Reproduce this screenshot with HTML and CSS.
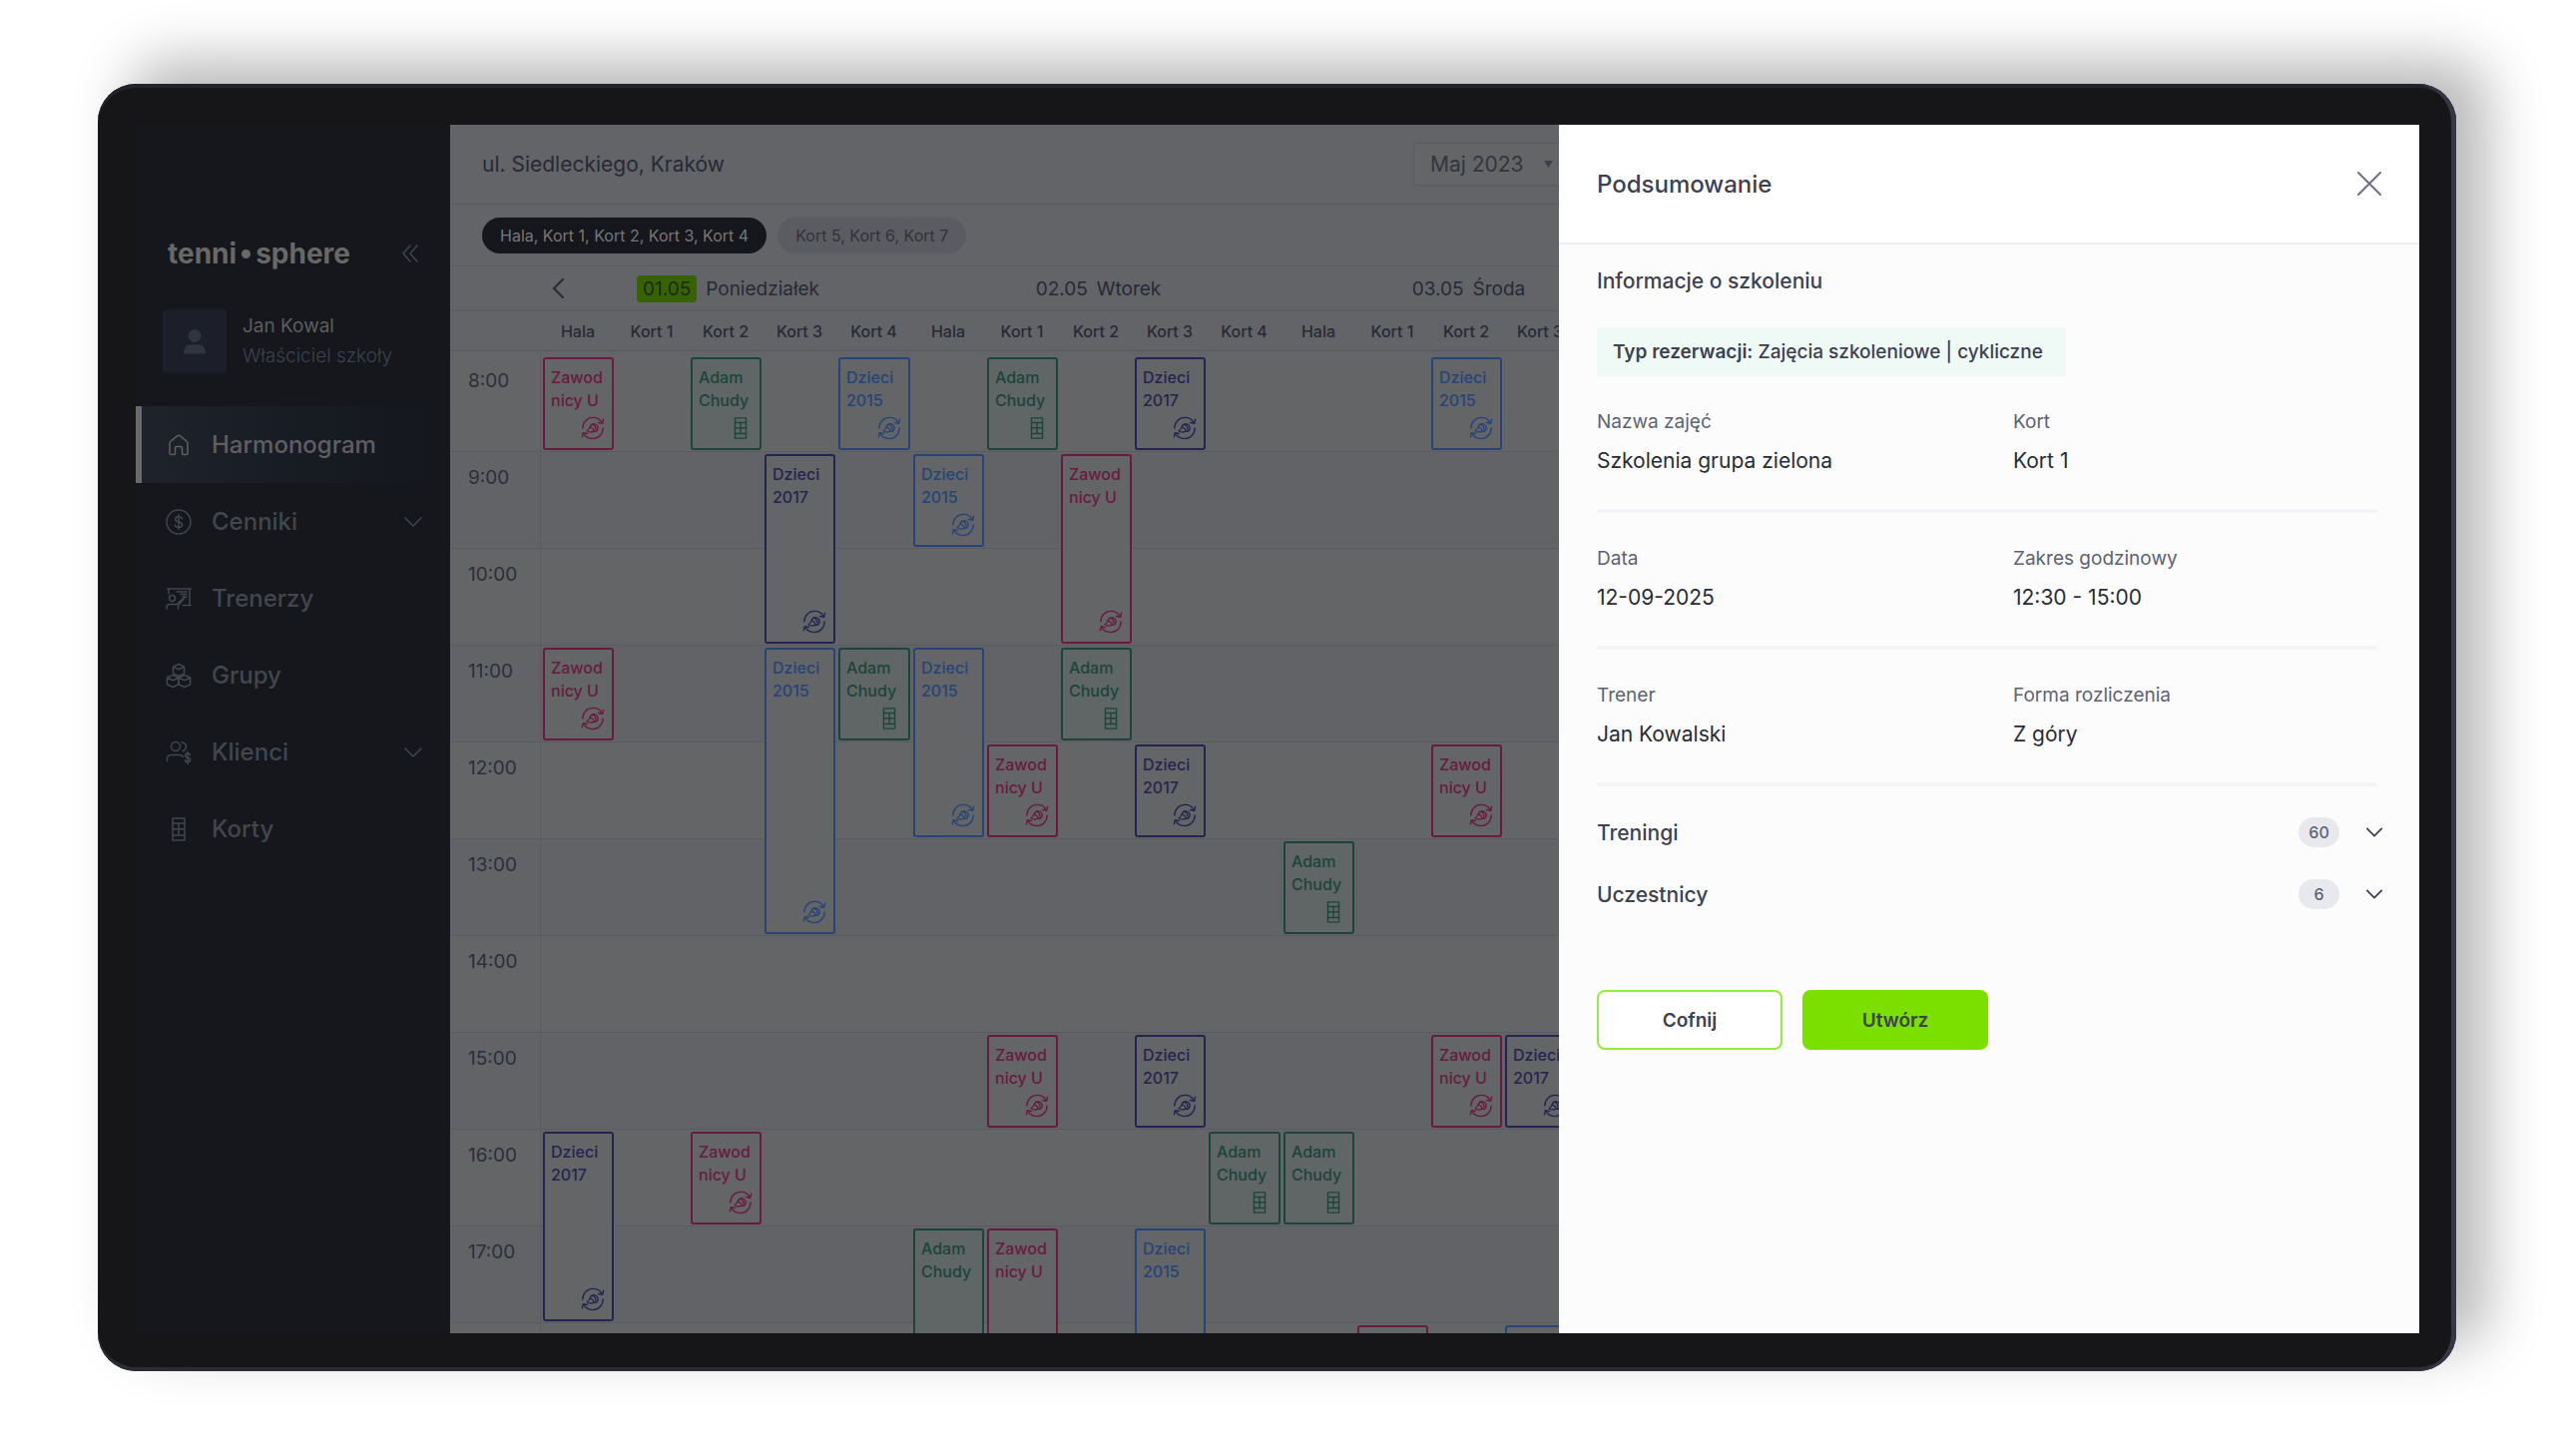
FILE: index.html
```html
<!DOCTYPE html>
<html lang="pl">

<head>
    <meta charset="UTF-8">
    <meta name="viewport" content="width=device-width, initial-scale=1.0">
    <title>tennisphere - Harmonogram</title>
    <link rel="stylesheet" href="styles.css">
</head>

<body>
    <!-- icons -->
    <svg class="sprite" xmlns="http://www.w3.org/2000/svg">
        <symbol id="i-home" viewBox="0 0 26 26">
            <path d="M4 11.5 Q4 10 5.2 9 L11.6 3.8 Q13 2.8 14.4 3.8 L20.8 9 Q22 10 22 11.5 V21 Q22 22.5 20.5 22.5 H17.5 Q16.5 22.5 16.5 21.5 V16 Q16.5 14.5 15 14.5 H11 Q9.5 14.5 9.5 16 V21.5 Q9.5 22.5 8.5 22.5 H5.5 Q4 22.5 4 21 Z" />
        </symbol>
        <symbol id="i-price" viewBox="0 0 26 26">
            <circle cx="13" cy="13" r="12" />
            <path d="M16.4 9.8 Q16 7.8 13 7.8 Q9.700 7.8 9.7 10.3 Q9.7 12.5 13 13 Q16.5 13.5 16.5 15.9 Q16.5 18.3 13 18.3 Q9.8 18.3 9.4 16.1 M13 5.8 V20.2" />
        </symbol>
        <symbol id="i-coach" viewBox="0 0 26 26">
            <path d="M1.5 3 H25 M3 3 V8 M24 3 V19.5 M17.5 19.5 H25 M11 6 H21 M15 8.5 H21 M17 11 H21" />
            <circle cx="6.5" cy="12.5" r="3" />
            <path d="M1 23 V21.5 Q1 18.5 4 18.5 H11 L19.5 11 L12.5 20 V23" />
        </symbol>
        <symbol id="i-group" viewBox="0 0 26 26">
            <path d="M13 1.5 L18.5 4.2 V10.8 L13 13.5 L7.5 10.8 V4.2 Z M7.5 4.2 L13 6.8 L18.5 4.2" />
            <path d="M7.2 12.5 L13 15 V21.8 L7.2 24.5 L1.4 21.8 V15 Z M1.4 15 L7.2 17.7 L13 15" />
            <path d="M18.8 12.5 L24.6 15 V21.8 L18.8 24.5 L13 21.8 V15 Z M13 15 L18.8 17.7 L24.6 15" />
        </symbol>
        <symbol id="i-client" viewBox="0 0 26 26">
            <circle cx="10" cy="7" r="4.5" />
            <path d="M1.5 21.5 V19.5 Q1.5 15.5 5.5 15.5 H13.5 Q16.5 15.5 17.5 17.5 M16 2.8 Q20.5 4 20.5 7 Q20.5 10.5 17 11.5" />
            <path d="M24.5 15.5 Q24 14 22 14 Q19.5 14 19.5 16 Q19.5 17.8 22 18.2 Q24.7 18.6 24.7 20.5 Q24.7 22.5 22 22.5 Q19.8 22.5 19.3 20.8 M22 12.5 V24.5" />
        </symbol>
        <symbol id="i-court" viewBox="0 0 26 26">
            <path d="M7 2 H19 V24 H7 Z M7 7 H19 M7 12.8 H19 M7 19 H19 M13 7 V19" />
        </symbol>
        <symbol id="i-cycle" viewBox="0 0 26 26">
            <path d="M2 13 C2 6.5 7 1.500 13 1.5 C17.5 1.5 21.5 4 23 7.5 M24.5 3.5 L23.5 8 L19 7" />
            <path d="M24 13 C24 19.5 19 24.5 13 24.5 C8.5 24.500 4.5 22 3 18.5 M1.5 22.5 L2.5 18 L7 19" />
            <path d="M6.500 16 Q9 14.500 10 11.500 Q11.500 8 15 8.500 Q19 9.500 18.500 13.500 Q17.500 17 14 16.500 Q10.500 18.500 6.500 16 Z M10 12 Q14 13 14 16.500 M13 9 Q16.500 10.500 16 14" />
        </symbol>
        <symbol id="i-down" viewBox="0 0 20 20">
            <path d="M2 6 L10 14 L18 6" />
        </symbol>
    </svg>

    <div class="device">
        <div class="screen">
            <aside class="sidebar">
                <div class="brand">
                    <a class="logo" href="#">tenni<span class="logo-dot"></span>sphere</a>
                    <button class="collapse" aria-label="Zwiń menu">
                        <svg viewBox="0 0 18 18"><path d="M9 1 L2 9 L9 17 M16 1 L9 9 L16 17" /></svg>
                    </button>
                </div>
                <div class="user">
                    <div class="avatar">
                        <svg viewBox="0 0 26 28"><circle cx="13" cy="7.5" r="7" /><path d="M1 27 V25 Q2 17 9 17 H17 Q24 17 25 25 V27 Z" /></svg>
                    </div>
                    <div>
                        <p class="user-name">Jan Kowal</p>
                        <p class="user-role">Właściciel szkoły</p>
                    </div>
                </div>
                <nav class="menu">
                    <a class="active" href="#"><svg class="icon"><use href="#i-home" /></svg>Harmonogram</a>
                    <a href="#"><svg class="icon"><use href="#i-price" /></svg>Cenniki<svg class="arrow"><use href="#i-down" /></svg></a>
                    <a href="#"><svg class="icon"><use href="#i-coach" /></svg>Trenerzy</a>
                    <a href="#"><svg class="icon"><use href="#i-group" /></svg>Grupy</a>
                    <a href="#"><svg class="icon"><use href="#i-client" /></svg>Klienci<svg class="arrow"><use href="#i-down" /></svg></a>
                    <a href="#"><svg class="icon"><use href="#i-court" /></svg>Korty</a>
                </nav>
            </aside>

            <main class="main">
                <header class="topbar">
                    <span>ul. Siedleckiego, Kraków</span>
                    <div class="month">
                        <select aria-label="Miesiąc">
                            <option>Maj 2023</option>
                        </select>
                        <svg viewBox="0 0 10 8"><path d="M0 0 H10 L5 8 Z" /></svg>
                    </div>
                </header>
                <div class="chips">
                    <button class="chip chip-on">Hala, Kort 1, Kort 2, Kort 3, Kort 4</button>
                    <button class="chip">Kort 5, Kort 6, Kort 7</button>
                </div>
                <div class="days">
                    <button class="prev" aria-label="Poprzedni"><svg viewBox="0 0 12 20"><path d="M11 1 L2 10 L11 19" /></svg></button>
                    <div class="day"><span class="today">01.05</span>Poniedziałek</div>
                    <div class="day"><span>02.05</span>Wtorek</div>
                    <div class="day"><span>03.05</span>Środa</div>
                </div>
                <div class="courts" id="courts"></div>
                <div class="calendar" id="calendar"></div>
            </main>

            <section class="drawer">
                <header class="drawer-head">
                    <h1>Podsumowanie</h1>
                    <button class="close" aria-label="Zamknij"><svg viewBox="0 0 26 26"><path d="M2 2 L24 24 M24 2 L2 24" /></svg></button>
                </header>
                <div class="drawer-body">
                    <h2>Informacje o szkoleniu</h2>
                    <p class="type"><b>Typ rezerwacji:</b> Zajęcia szkoleniowe | cykliczne</p>
                    <dl class="pair">
                        <div><dt>Nazwa zajęć</dt><dd>Szkolenia grupa zielona</dd></div>
                        <div><dt>Kort</dt><dd>Kort 1</dd></div>
                    </dl>
                    <dl class="pair">
                        <div><dt>Data</dt><dd>12-09-2025</dd></div>
                        <div><dt>Zakres godzinowy</dt><dd>12:30 - 15:00</dd></div>
                    </dl>
                    <dl class="pair">
                        <div><dt>Trener</dt><dd>Jan Kowalski</dd></div>
                        <div><dt>Forma rozliczenia</dt><dd>Z góry</dd></div>
                    </dl>
                    <div class="folds">
                        <button class="fold">Treningi<span class="count">60</span><svg><use href="#i-down" /></svg></button>
                        <button class="fold">Uczestnicy<span class="count">6</span><svg><use href="#i-down" /></svg></button>
                    </div>
                    <div class="actions">
                        <button class="btn">Cofnij</button>
                        <button class="btn btn-main">Utwórz</button>
                    </div>
                </div>
            </section>
        </div>
    </div>

    <script>
        var names = ['Hala', 'Kort 1', 'Kort 2', 'Kort 3', 'Kort 4']
        var types = {
            zawod: ['Zawod', 'nicy U', 'i-cycle'],
            adam: ['Adam', 'Chudy', 'i-court'],
            d15: ['Dzieci', '2015', 'i-cycle'],
            d17: ['Dzieci', '2017', 'i-cycle']
        }
        // type, column (0-14), start hour, length in hours
        var events = [
            ['zawod', 0, 8, 1], ['adam', 2, 8, 1], ['d15', 4, 8, 1], ['adam', 6, 8, 1], ['d17', 8, 8, 1], ['d15', 12, 8, 1],
            ['d17', 3, 9, 2], ['d15', 5, 9, 1], ['zawod', 7, 9, 2],
            ['zawod', 0, 11, 1], ['d15', 3, 11, 3], ['adam', 4, 11, 1], ['d15', 5, 11, 2], ['adam', 7, 11, 1],
            ['zawod', 6, 12, 1], ['d17', 8, 12, 1], ['zawod', 12, 12, 1],
            ['adam', 10, 13, 1],
            ['zawod', 6, 15, 1], ['d17', 8, 15, 1], ['zawod', 12, 15, 1], ['d17', 13, 15, 1],
            ['d17', 0, 16, 2], ['zawod', 2, 16, 1], ['adam', 9, 16, 1], ['adam', 10, 16, 1],
            ['adam', 5, 17, 2], ['zawod', 6, 17, 2], ['d15', 8, 17, 2],
            ['zawod', 11, 18, 1], ['d15', 13, 18, 1]
        ]
        var lastLabel = 17
        var courts = document.getElementById('courts')
        var calendar = document.getElementById('calendar')
        var html = '<span></span>'
        for (var i = 0; i < 15; i++) {
            html += '<span>' + names[i % 5] + '</span>'
        }
        courts.innerHTML = html

        html = ''
        for (var h = 8; h < 19; h++) {
            html += '<div class="hour" style="grid-row:' + (h - 7) + '"><time>' + (h > lastLabel ? '' : h + ':00') + '</time></div>'
        }
        events.forEach(function (e) {
            var t = types[e[0]]
            var label = e[2] > lastLabel ? '' : '<p>' + t[0] + '</p><p>' + t[1] + '</p>'
            html += '<article class="event ' + e[0] + '" style="grid-column:' + (e[1] + 2) + ';grid-row:' + (e[2] - 7) + ' / span ' + e[3] + '">' +
                label + '<svg><use href="#' + t[2] + '" /></svg></article>'
        })
        calendar.innerHTML = html
    </script>
</body>

</html>
```
FILE: styles.css
```css
* {
    box-sizing: border-box;
    margin: 0;
    padding: 0;
}

body {
    height: 100vh;
    padding: 84px 99px 85px 98px;
    background-color: #fff;
    font-family: Inter, "Liberation Sans", sans-serif;
    font-size: 19px;
    overflow: hidden;
}

button,
select {
    font-family: inherit;
    color: inherit;
    border: none;
    background: none;
    cursor: pointer;
}

a {
    text-decoration: none;
    color: inherit;
}

svg {
    fill: none;
    stroke: currentColor;
    stroke-width: 2px;
    stroke-linecap: round;
    stroke-linejoin: round;
}

.sprite {
    display: none;
}

/* tablet frame */
.device {
    height: 100%;
    padding: 41px 37px 38px 38px;
    border-radius: 38px;
    background-color: #161618;
    box-shadow: inset -5px 0 0 #343744, inset 0 -4px 0 #292b35, inset 0 4px 0 #20242b, 32px -24px 56px rgba(0, 0, 0, 0.28);
}

.screen {
    position: relative;
    display: flex;
    height: 100%;
    overflow: hidden;
}

/* sidebar */
.sidebar {
    flex: none;
    width: 315px;
    padding-top: 112px;
    background-color: #15171c;
    color: #41464f;
}

.brand {
    display: flex;
    align-items: center;
    justify-content: space-between;
    height: 34px;
    padding: 0 31px 0 32px;
}

.logo {
    display: flex;
    align-items: center;
    font-size: 28px;
    font-weight: 700;
    color: #686868;
}

.logo-dot {
    width: 9px;
    height: 9px;
    margin: 0 5px;
    border-radius: 50%;
    background-color: #686868;
}

.collapse {
    width: 18px;
    height: 18px;
    color: #41454f;
}

.collapse svg {
    display: block;
    stroke-width: 1.5;
}

.user {
    display: flex;
    align-items: center;
    gap: 16px;
    margin-top: 39px;
    padding-left: 27px;
}

.avatar {
    display: flex;
    align-items: center;
    justify-content: center;
    width: 64px;
    height: 64px;
    border-radius: 2px;
    background-color: #1c1f29;
}

.avatar svg {
    width: 24px;
    height: 27px;
    fill: #30343e;
    stroke: none;
}

.user-name,
.user-role {
    line-height: 30px;
}

.user-name {
    color: #5c5d61;
}

.user-role {
    font-weight: 300;
    color: #3c424c;
}

.menu {
    margin-top: 33px;
}

.menu a {
    display: flex;
    align-items: center;
    height: 77px;
    padding: 0 27px 0 30px;
    font-size: 24px;
    font-weight: 500;
}

.menu .icon {
    width: 26px;
    height: 26px;
    margin-right: 20px;
    stroke-width: 1.5;
}

.menu .arrow {
    width: 20px;
    height: 20px;
    margin-left: auto;
    stroke-width: 1.5;
}

.menu .active {
    padding-left: 24px;
    border-left: 6px solid #6a6a6b;
    background: linear-gradient(90deg, #1e222b, #15181f 80%, #15171c);
    color: #5f5f61;
}

/* calendar */
.main {
    --cols: 91px repeat(4, 74px) 75px repeat(4, 74px) 75px repeat(4, 74px) 1fr;
    flex: 1;
    min-width: 0;
    background-color: #636468;
    color: #272934;
}

.topbar {
    display: flex;
    align-items: center;
    height: 80px;
    padding-left: 32px;
    border-bottom: 1px solid #5a5b60;
    font-size: 21px;
}

.month {
    display: flex;
    align-items: center;
    width: 160px;
    height: 43px;
    margin-left: 690px;
    padding-left: 16px;
    border: 1px solid #5a5b60;
    border-radius: 4px;
    background-color: #646566;
}

.month select {
    appearance: none;
    width: 114px;
    font-size: 21px;
    color: #33353f;
}

.month svg {
    width: 9px;
    height: 7px;
    fill: #3c3e49;
    stroke: none;
}

.chips {
    display: flex;
    align-items: center;
    gap: 11px;
    height: 62px;
    padding: 1px 0 0 32px;
    border-bottom: 1px solid #5a5b60;
}

.chip {
    height: 36px;
    padding: 0 18px;
    border-radius: 18px;
    background-color: #5b5c61;
    font-size: 16px;
    color: #30323b;
}

.chip-on {
    background-color: #15171c;
    color: #77787a;
}

.days {
    display: grid;
    grid-template-columns: 91px repeat(3, 371px);
    height: 45px;
    border-bottom: 1px solid #5a5b60;
}

.prev {
    justify-self: end;
    align-self: center;
    width: 12px;
    height: 20px;
    margin-right: -23px;
}

.prev svg {
    display: block;
}

.day {
    display: flex;
    align-items: center;
    justify-content: center;
    gap: 9px;
    padding-left: 4px;
}

.today {
    padding: 0 6px;
    border-radius: 4px;
    background-color: #376202;
    line-height: 27px;
    color: #1b2a1c;
}

.courts {
    display: grid;
    grid-template-columns: var(--cols);
    height: 40px;
    border-bottom: 1px solid #5a5b60;
    font-size: 16px;
    font-weight: 500;
    line-height: 40px;
    text-align: center;
}

.courts span:last-child {
    width: 74px;
}

.calendar {
    display: grid;
    grid-template-columns: var(--cols);
    grid-auto-rows: 97px;
    padding-top: 4px;
}

.hour {
    grid-column: 1 / -1;
    border-bottom: 1px solid #5a5b60;
    background-color: #646566;
}

.hour:nth-child(even) {
    background-color: #626367;
}

.hour time {
    display: block;
    width: 91px;
    height: 96px;
    padding: 13px 0 0 18px;
    border-right: 1px solid #5a5b60;
    line-height: 26px;
    color: #2c2e37;
}

.event {
    display: flex;
    flex-direction: column;
    margin: 2px 1px 2px 2px;
    padding: 7px 6px;
    border: 2px solid;
    border-radius: 3px;
    background-color: #646566;
    font-size: 16px;
    font-weight: 500;
    line-height: 23px;
}

.event svg {
    width: 24px;
    height: 24px;
    margin: auto 1px 1px auto;
    stroke-width: 1.5;
}

.zawod {
    color: #681b3f;
}

.adam {
    background-color: #5f6665;
    color: #1c4439;
}

.d15 {
    color: #264478;
}

.d17 {
    color: #242451;
}

/* drawer */
.drawer {
    position: absolute;
    top: 0;
    right: 0;
    bottom: 0;
    width: 862px;
    background-color: #fcfcfd;
    color: #3d4152;
}

.drawer-head {
    display: flex;
    align-items: center;
    justify-content: space-between;
    height: 120px;
    padding: 0 37px 0 38px;
    border-bottom: 2px solid #ebecf4;
    background-color: #fff;
}

.drawer h1 {
    font-size: 24px;
    font-weight: 500;
}

.close {
    width: 26px;
    height: 26px;
    color: #6b7083;
}

.close svg {
    display: block;
}

.drawer-body {
    padding: 22px 36px 0 38px;
}

.drawer h2 {
    font-size: 21px;
    font-weight: 500;
    line-height: 30px;
}

.type {
    width: 470px;
    margin-top: 31px;
    padding: 0 16px;
    background-color: #effaf6;
    font-size: 19px;
    font-weight: 500;
    line-height: 49px;
}

.type b {
    font-weight: 600;
}

.pair {
    display: grid;
    grid-template-columns: 417px 1fr;
    height: 137px;
    margin-right: 6px;
    padding-top: 32px;
    border-bottom: 4px solid #f4f5f9;
}

.pair dt {
    font-size: 19px;
    line-height: 28px;
    color: #5d6275;
}

.pair dd {
    margin-top: 9px;
    font-size: 21px;
    line-height: 32px;
    color: #282c38;
}

.folds {
    padding-top: 15px;
}

.fold {
    display: flex;
    align-items: center;
    width: 100%;
    height: 62px;
    font-size: 21px;
    font-weight: 500;
}

.fold svg {
    width: 18px;
    height: 18px;
    margin-left: 26px;
}

.count {
    width: 41px;
    margin-left: auto;
    border-radius: 15px;
    background-color: #e8e9ef;
    font-size: 16px;
    line-height: 30px;
    color: #5d6275;
}

.actions {
    display: flex;
    gap: 20px;
    margin-top: 65px;
}

.btn {
    width: 186px;
    height: 60px;
    border: 2px solid #97ea3e;
    border-radius: 8px;
    background-color: #fff;
    font-size: 19px;
    font-weight: 600;
}

.btn-main {
    border-color: #7bdf00;
    background-color: #7bdf00;
}
```
